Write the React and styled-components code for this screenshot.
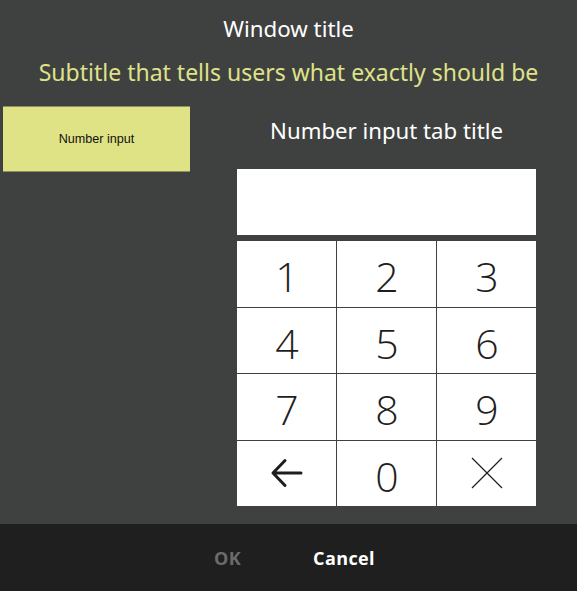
import React from "react";
import styled, { createGlobalStyle } from "styled-components";

const Global = createGlobalStyle`
  html, body { margin: 0; padding: 0; background: #3f4140; }
  body { font-family: "Noto Sans", sans-serif; }
  * { box-sizing: border-box; }
`;

const Page = styled.div`
  width: 577px;
  height: 591px;
  display: flex;
  flex-direction: column;
  background: #3f4140;
  overflow: hidden;
`;

const Main = styled.div`
  flex: 1;
  display: flex;
  flex-direction: column;
`;

const Header = styled.header`
  display: flex;
  flex-direction: column;
  align-items: center;
  padding-top: 14px;
`;

const Title = styled.h1`
  margin: 0;
  height: 30px;
  line-height: 30px;
  font-family: "Noto Sans", sans-serif;
  font-weight: 400;
  font-size: 22.3px;
  color: #ffffff;
`;

const Subtitle = styled.h2`
  margin: 13px 0 0;
  height: 30px;
  line-height: 30px;
  font-family: "Noto Sans", sans-serif;
  font-weight: 400;
  font-size: 23px;
  color: #dfe288;
  white-space: nowrap;
`;

const Content = styled.div`
  display: flex;
  padding-top: 19px;
`;

const Sidebar = styled.nav`
  width: 237px;
  padding-left: 3px;
`;

const TabButton = styled.button`
  width: 187px;
  height: 66px;
  border: none;
  border-top: 1px solid #8f9158;
  border-bottom: 1px solid #8f9158;
  background: ${(p) => (p.$active ? "#dfe285" : "transparent")};
  color: #111;
  font-family: "Liberation Sans", Arial, sans-serif;
  font-size: 12.6px;
  padding: 0;
  display: flex;
  align-items: center;
  justify-content: center;
`;

const Panel = styled.section`
  width: 299px;
  display: flex;
  flex-direction: column;
  align-items: center;
`;

const PanelTitle = styled.h3`
  margin: 10px 0 0;
  height: 30px;
  line-height: 30px;
  font-family: "Noto Sans", sans-serif;
  font-weight: 400;
  font-size: 22.2px;
  color: #ffffff;
  white-space: nowrap;
`;

const Display = styled.div`
  margin-top: 23px;
  width: 299px;
  height: 66px;
  background: #ffffff;
`;

const Keypad = styled.div`
  margin-top: 6px;
  width: 299px;
  height: 265px;
  display: grid;
  grid-template-columns: repeat(3, 1fr);
  grid-template-rows: repeat(4, 1fr);
  gap: 1px;
  background: #3f4140;
`;

const Key = styled.button`
  border: none;
  padding: 0 0 0 1px;
  background: #ffffff;
  color: #1e1e1e;
  font-family: "Open Sans", sans-serif;
  font-weight: 300;
  font-size: 41px;
  line-height: 1;
  display: flex;
  align-items: center;
  justify-content: center;
  padding-top: 6px;
`;

const IconKey = styled(Key)`
  padding-top: 0;
`;

const Footer = styled.footer`
  height: 67px;
  background: #1f1f1f;
  display: flex;
  align-items: center;
  justify-content: center;
  gap: 72px;
  padding-left: 12px;
`;

const FooterButton = styled.button`
  border: none;
  background: transparent;
  padding: 0;
  font-family: "Open Sans", sans-serif;
  font-weight: 700;
  font-size: 18px;
  letter-spacing: 0.4px;
  color: ${(p) => (p.$disabled ? "#6b6b6b" : "#ffffff")};
`;

const BackIcon = () => (
  <svg width="34" height="32" viewBox="0 0 34 32" fill="none">
    <path d="M3 16 H31 M15 3.5 L3 16 L15 28.5" stroke="#1e1e1e" strokeWidth="3" strokeLinecap="round" strokeLinejoin="round" />
  </svg>
);

const ClearIcon = () => (
  <svg width="32" height="32" viewBox="0 0 32 32" fill="none">
    <path d="M1 1 L31 31 M31 1 L1 31" stroke="#1e1e1e" strokeWidth="1.2" />
  </svg>
);

export default function App() {
  const keys = ["1", "2", "3", "4", "5", "6", "7", "8", "9"];
  return (
    <Page>
      <Global />
      <Main>
        <Header>
          <Title>Window title</Title>
          <Subtitle>Subtitle that tells users what exactly should be</Subtitle>
        </Header>
        <Content>
          <Sidebar>
            <TabButton $active>Number input</TabButton>
          </Sidebar>
          <Panel>
            <PanelTitle>Number input tab title</PanelTitle>
            <Display />
            <Keypad>
              {keys.map((k) => (
                <Key key={k}>{k}</Key>
              ))}
              <IconKey aria-label="Backspace"><BackIcon /></IconKey>
              <Key>0</Key>
              <IconKey aria-label="Clear"><ClearIcon /></IconKey>
            </Keypad>
          </Panel>
        </Content>
      </Main>
      <Footer>
        <FooterButton $disabled>OK</FooterButton>
        <FooterButton>Cancel</FooterButton>
      </Footer>
    </Page>
  );
}
